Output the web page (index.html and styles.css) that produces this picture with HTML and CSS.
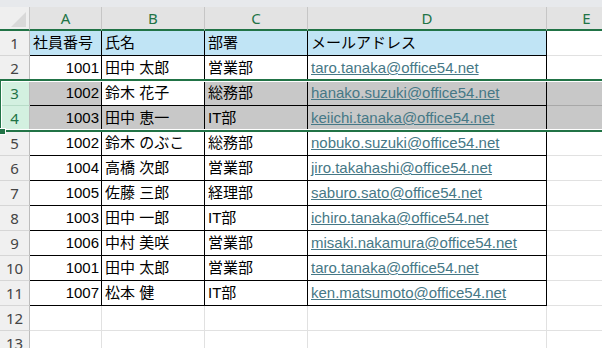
FILE: index.html
```html
<!DOCTYPE html>
<html lang="ja">
<head>
<meta charset="utf-8">
<link rel="stylesheet" href="styles.css">
</head>
<body>
<div class="strip"></div>
<div class="sheet">
  <div class="corner"></div>
  <div class="colhead">A</div>
  <div class="colhead">B</div>
  <div class="colhead">C</div>
  <div class="colhead">D</div>
  <div class="colhead">E</div>

  <div class="rowhead">1</div>
  <div class="cell data title">社員番号</div>
  <div class="cell data title">氏名</div>
  <div class="cell data title">部署</div>
  <div class="cell data title">メールアドレス</div>
  <div class="cell"></div>

  <div class="rowhead">2</div>
  <div class="cell data num">1001</div>
  <div class="cell data">田中 太郎</div>
  <div class="cell data">営業部</div>
  <div class="cell data"><span class="link">taro.tanaka@office54.net</span></div>
  <div class="cell"></div>

  <div class="rowhead sel">3</div>
  <div class="cell data num grey">1002</div>
  <div class="cell data">鈴木 花子</div>
  <div class="cell data grey">総務部</div>
  <div class="cell data grey"><span class="link">hanako.suzuki@office54.net</span></div>
  <div class="cell grey mid"></div>

  <div class="rowhead sel">4</div>
  <div class="cell data num grey">1003</div>
  <div class="cell data grey">田中 恵一</div>
  <div class="cell data grey">IT部</div>
  <div class="cell data grey"><span class="link">keiichi.tanaka@office54.net</span></div>
  <div class="cell grey"></div>

  <div class="rowhead">5</div>
  <div class="cell data num">1002</div>
  <div class="cell data">鈴木 のぶこ</div>
  <div class="cell data">総務部</div>
  <div class="cell data"><span class="link">nobuko.suzuki@office54.net</span></div>
  <div class="cell"></div>

  <div class="rowhead">6</div>
  <div class="cell data num">1004</div>
  <div class="cell data">高橋 次郎</div>
  <div class="cell data">営業部</div>
  <div class="cell data"><span class="link">jiro.takahashi@office54.net</span></div>
  <div class="cell"></div>

  <div class="rowhead">7</div>
  <div class="cell data num">1005</div>
  <div class="cell data">佐藤 三郎</div>
  <div class="cell data">経理部</div>
  <div class="cell data"><span class="link">saburo.sato@office54.net</span></div>
  <div class="cell"></div>

  <div class="rowhead">8</div>
  <div class="cell data num">1003</div>
  <div class="cell data">田中 一郎</div>
  <div class="cell data">IT部</div>
  <div class="cell data"><span class="link">ichiro.tanaka@office54.net</span></div>
  <div class="cell"></div>

  <div class="rowhead">9</div>
  <div class="cell data num">1006</div>
  <div class="cell data">中村 美咲</div>
  <div class="cell data">営業部</div>
  <div class="cell data"><span class="link">misaki.nakamura@office54.net</span></div>
  <div class="cell"></div>

  <div class="rowhead">10</div>
  <div class="cell data num">1001</div>
  <div class="cell data">田中 太郎</div>
  <div class="cell data">営業部</div>
  <div class="cell data"><span class="link">taro.tanaka@office54.net</span></div>
  <div class="cell"></div>

  <div class="rowhead">11</div>
  <div class="cell data num">1007</div>
  <div class="cell data">松本 健</div>
  <div class="cell data">IT部</div>
  <div class="cell data"><span class="link">ken.matsumoto@office54.net</span></div>
  <div class="cell"></div>

  <div class="rowhead">12</div>
  <div class="cell"></div>
  <div class="cell"></div>
  <div class="cell"></div>
  <div class="cell"></div>
  <div class="cell"></div>

  <div class="rowhead">13</div>
  <div class="cell"></div>
  <div class="cell"></div>
  <div class="cell"></div>
  <div class="cell"></div>
  <div class="cell"></div>

  <div class="selection"></div>
  <div class="handle"></div>
</div>
</body>
</html>
```

FILE: styles.css
```css
html, body {
  margin: 0;
  padding: 0;
  background: #ffffff;
  overflow: hidden;
  width: 602px;
  height: 348px;
}

body {
  font-family: "Liberation Sans", "Noto Sans CJK JP", sans-serif;
  font-size: 15px;
  color: #000;
}

.strip {
  height: 7px;
  background: #e7e9ec;
}

.sheet {
  position: relative;
  display: grid;
  grid-template-columns: 30px 72px 103px 103px 239px 80px;
  grid-template-rows: 24px repeat(13, 25px);
}

.corner {
  position: relative;
  background: #efefef;
  border-right: 1px solid #c8c8c8;
  border-bottom: 2px solid #217346;
  box-sizing: border-box;
}

.corner::after {
  content: "";
  position: absolute;
  right: 3px;
  bottom: 2px;
  width: 15px;
  height: 15px;
  background: #d9d9d9;
  clip-path: polygon(100% 0, 100% 100%, 0 100%);
}

.colhead {
  box-sizing: border-box;
  background: #e3e3e3;
  border-right: 1px solid #c6c6c6;
  border-bottom: 2px solid #217346;
  color: #217346;
  text-align: center;
  line-height: 22px;
  font-family: "Noto Sans", "Liberation Sans", sans-serif;
  font-size: 15px;
}

.rowhead {
  box-sizing: border-box;
  background: #f0f0f0;
  border-right: 1px solid #bcbcbc;
  border-bottom: 1px solid #d6d6d6;
  color: #444;
  text-align: center;
  line-height: 24px;
  font-family: "Noto Sans", "Liberation Sans", sans-serif;
  font-size: 15px;
}

.rowhead.sel {
  background: #d3f0e0;
  color: #217346;
  border-bottom-color: #b8dcc8;
}

.cell {
  box-sizing: border-box;
  border-right: 1px solid #e1e1e1;
  border-bottom: 1px solid #e1e1e1;
  line-height: 24px;
  padding: 0 3px;
  white-space: nowrap;
  overflow: hidden;
}

.cell.data {
  border-right-color: #000;
  border-bottom-color: #000;
}

.cell.title {
  background: #c0e4f5;
}

.cell.num {
  text-align: right;
  padding-right: 2px;
}

.cell.grey {
  background: #c8c8c8;
}

.cell.grey.mid {
  border-bottom-color: #a8a8a8;
}

.link {
  color: #467886;
  text-decoration: underline;
}

.selection {
  position: absolute;
  left: -1px;
  top: 72px;
  width: 620px;
  height: 53px;
  box-sizing: border-box;
  border: 2px solid #217346;
  box-shadow: inset 0 0 0 1px #ffffff;
  pointer-events: none;
}

.handle {
  position: absolute;
  left: -1px;
  top: 121px;
  width: 5px;
  height: 5px;
  background: #217346;
  border: 1px solid #ffffff;
}
```
